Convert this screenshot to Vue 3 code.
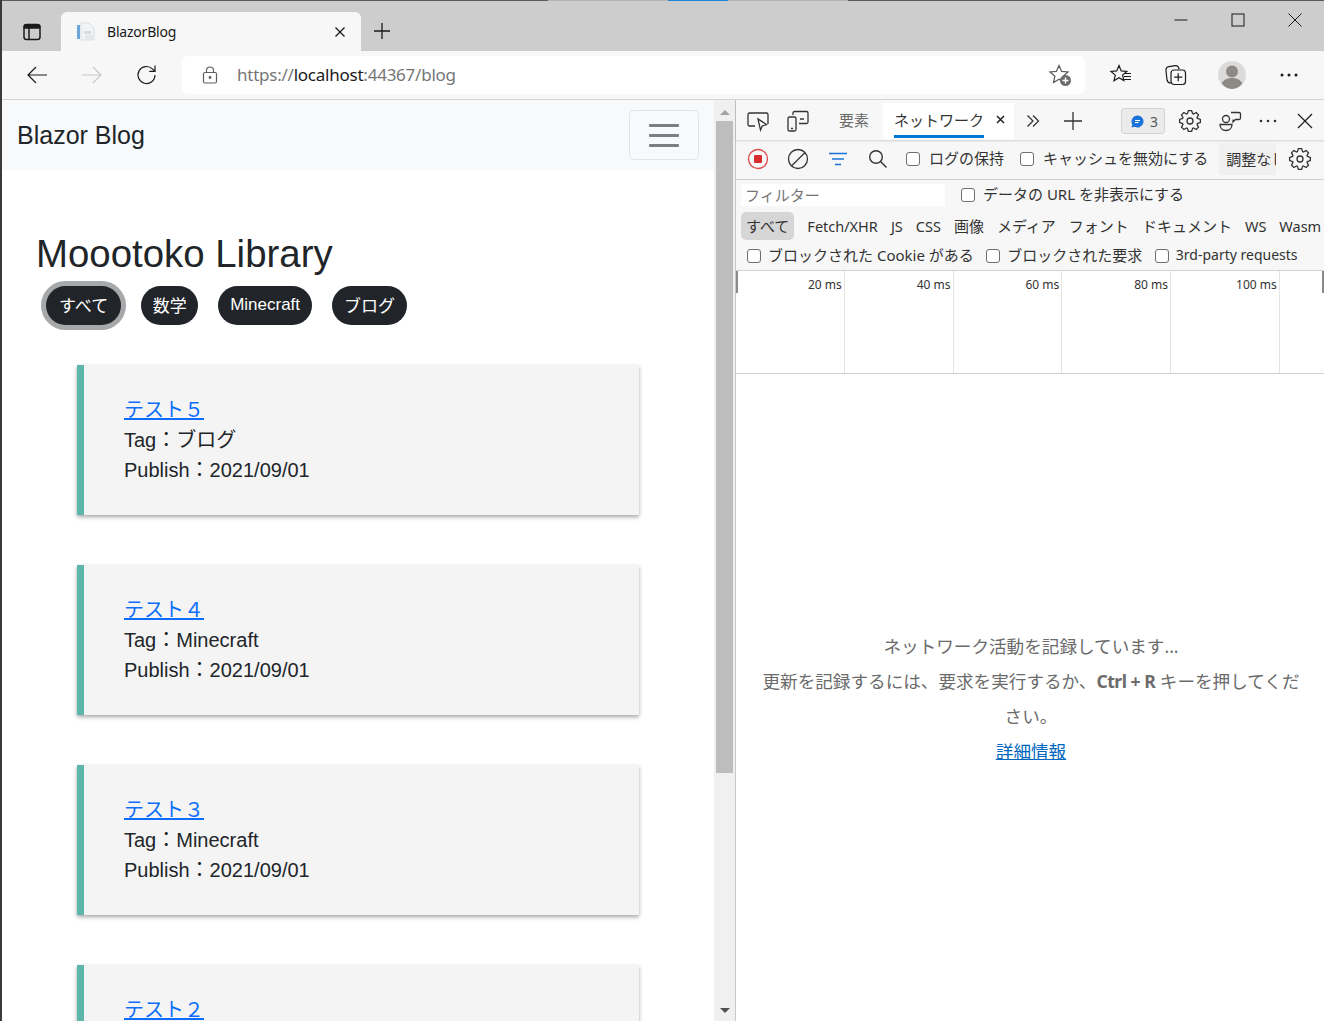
<template>
  <div class="window">
    <div class="top-strip">
      <span class="strip-a"></span>
      <span class="strip-b"></span>
      <span class="strip-c"></span>
    </div>

    <header class="titlebar">
      <button class="tab-panel-btn">
        <svg width="20" height="20" viewBox="0 0 20 20" fill="none" stroke="#1a1a1a" stroke-width="1.5">
          <rect x="2" y="2.5" width="16" height="15" rx="2.5" />
          <path d="M2.5 4.5 a2 2 0 0 1 2-1.6 h11 a2 2 0 0 1 2 1.6 v1.5 h-15z" fill="#1a1a1a" />
          <path d="M7 6v11" />
        </svg>
      </button>
      <div class="tab">
        <svg class="favicon" width="20" height="20" viewBox="0 0 20 20">
          <rect x="1" y="3" width="3" height="14" fill="#6aa8dc" />
          <path d="M5 1h8l5 5v12H5z" fill="#f1f3f5" stroke="#dbe0e4" />
          <rect x="8" y="9" width="7" height="3" fill="#d6dbe0" />
          <rect x="9" y="13" width="9" height="5" fill="#e3e7ea" />
        </svg>
        <span class="tab-title">BlazorBlog</span>
        <svg class="tab-close" width="12" height="12" viewBox="0 0 12 12" stroke="#1a1a1a" stroke-width="1.3">
          <path d="M1.5 1.5l9 9M10.5 1.5l-9 9" />
        </svg>
      </div>
      <svg class="new-tab" width="18" height="18" viewBox="0 0 18 18" stroke="#1a1a1a" stroke-width="1.3">
        <path d="M9 1v16M1 9h16" />
      </svg>
      <div class="window-controls">
        <span class="win-btn">
          <svg width="14" height="14" viewBox="0 0 14 14" stroke="#1a1a1a"><path d="M0.5 7h13" /></svg>
        </span>
        <span class="win-btn">
          <svg width="14" height="14" viewBox="0 0 14 14" fill="none" stroke="#1a1a1a"><rect x="1" y="1" width="12" height="12" /></svg>
        </span>
        <span class="win-btn">
          <svg width="14" height="14" viewBox="0 0 14 14" stroke="#1a1a1a"><path d="M0.5 0.5l13 13M13.5 0.5l-13 13" /></svg>
        </span>
      </div>
    </header>

    <nav class="toolbar">
      <span class="tool">
        <svg width="24" height="20" viewBox="0 0 24 20" fill="none" stroke="#1a1a1a" stroke-width="1.2">
          <path d="M22 10H3M11 2l-8 8 8 8" />
        </svg>
      </span>
      <span class="tool">
        <svg width="24" height="20" viewBox="0 0 24 20" fill="none" stroke="#c8c8c8" stroke-width="1.2">
          <path d="M2 10h19M13 2l8 8-8 8" />
        </svg>
      </span>
      <span class="tool">
        <svg width="22" height="22" viewBox="0 0 22 22" fill="none" stroke="#1a1a1a" stroke-width="1.2">
          <path d="M19 11a8.5 8.5 0 1 1-2.6-6.1L19 7.2" />
          <path d="M19 1.5v5.8h-5.8" />
        </svg>
      </span>
      <div class="address">
        <svg class="lock" width="16" height="18" viewBox="0 0 16 18" fill="none" stroke="#5f5f5f" stroke-width="1.2">
          <rect x="1.5" y="6.5" width="13" height="10.5" rx="1.5" />
          <path d="M4.5 6.5V4.5a3.5 3.5 0 0 1 7 0v2" />
          <circle cx="8" cy="11.5" r="0.8" fill="#5f5f5f" />
        </svg>
        <span class="url"><span class="url-dim">https://</span>localhost<span class="url-dim">:44367/blog</span></span>
        <svg class="add-fav" width="24" height="24" viewBox="0 0 24 24">
          <path d="M11 2.5l2.6 5.9 6.4.6-4.8 4.2 1.4 6.3-5.6-3.3-5.5 3.3 1.4-6.3L2 9l6.4-.6z" fill="none" stroke="#5a5a5a" stroke-width="1.2" />
          <circle cx="17.5" cy="17.5" r="5.5" fill="#6b6b6b" />
          <path d="M17.5 14.5v6M14.5 17.5h6" stroke="#fff" stroke-width="1.4" />
        </svg>
      </div>
      <span class="tool first-right">
        <svg width="24" height="24" viewBox="0 0 24 24" fill="none" stroke="#1a1a1a" stroke-width="1.2">
          <path d="M10 2.5l2.2 5.4 5.6.5-4.2 3.7 1.2 5.5-4.8-2.9-5 3 1.3-5.6L2 8.4l5.7-.5z" />
          <path d="M15 10.500h7M15 13.500h7M15 16.500h7" />
        </svg>
      </span>
      <span class="tool">
        <svg width="24" height="24" viewBox="0 0 24 24" fill="none" stroke="#1a1a1a" stroke-width="1.2">
          <path d="M7 20a4 4 0 0 1-4-3L2 7.5A3.5 3.5 0 0 1 5 3.6l6.4-1a3 3 0 0 1 3.4 2.6l.2 1.3" />
          <rect x="7" y="7" width="14.5" height="14.5" rx="3" fill="#f7f7f7" />
          <path d="M14.2 10.2v8M10.2 14.2h8" />
        </svg>
      </span>
      <span class="tool wide">
        <svg width="28" height="28" viewBox="0 0 28 28">
          <circle cx="14" cy="14" r="14" fill="#dcdbd9" />
          <circle cx="14" cy="10.5" r="6" fill="#8d8a86" />
          <path d="M3.8 22.5C5.5 18.5 9.5 17 14 17s8.500 1.500 10.200 5.500A14 14 0 0 1 14 28a14 14 0 0 1-10.200-5.500z" fill="#8d8a86" />
        </svg>
      </span>
      <span class="tool wide">
        <svg width="18" height="4" viewBox="0 0 18 4" fill="#1a1a1a">
          <circle cx="2" cy="2" r="1.500" /><circle cx="9" cy="2" r="1.500" /><circle cx="16" cy="2" r="1.500" />
        </svg>
      </span>
    </nav>

    <div class="content">
      <main class="page">
        <div class="navbar">
          <span class="brand">Blazor Blog</span>
          <span class="toggler">
            <i></i><i></i><i></i>
          </span>
        </div>
        <section class="library">
          <h1>Moootoko Library</h1>
          <div class="tags">
            <button v-for="(tag, i) in tags" :key="tag" class="tag" :class="{ focused: i === 0 }">{{ tag }}</button>
          </div>
          <article v-for="post in posts" :key="post.title" class="post">
            <a class="post-link" href="#">{{ post.title }}</a>
            <div>Tag：{{ post.tag }}</div>
            <div>Publish：{{ post.date }}</div>
          </article>
        </section>
      </main>

      <div class="scrollbar">
        <span class="arrow-up"></span>
        <span class="thumb"></span>
        <span class="arrow-down"></span>
      </div>

      <aside class="devtools">
        <div class="dt-tabs">
          <span class="dt-icon">
            <svg width="22" height="22" viewBox="0 0 22 22" fill="none" stroke="#333" stroke-width="1.300">
              <path d="M8 16H2.500a1.500 1.500 0 0 1-1.500-1.500v-10A1.500 1.500 0 0 1 2.500 3h17A1.500 1.500 0 0 1 21 4.500V14" />
              <path d="M11 9l2.500 11 1.800-4 4.200-1.500z" fill="#fff" />
            </svg>
          </span>
          <span class="dt-icon">
            <svg width="22" height="22" viewBox="0 0 22 22" fill="none" stroke="#333" stroke-width="1.300">
              <path d="M6 5V3a1.500 1.500 0 0 1 1.500-1.500h12A1.500 1.500 0 0 1 21 3v9a1.500 1.500 0 0 1-1.500 1.500H12" />
              <rect x="1" y="7" width="8" height="14" rx="1.500" />
              <path d="M4 18.500h2M13 9h4" />
            </svg>
          </span>
          <span class="dt-tab">要素</span>
          <span class="dt-tab active">
            <span class="dt-tab-label">ネットワーク</span>
            <svg width="9" height="9" viewBox="0 0 9 9" stroke="#222" stroke-width="1.500"><path d="M1 1l7 7M8 1L1 8" /></svg>
          </span>
          <svg class="more-tabs" width="14" height="14" viewBox="0 0 14 14" fill="none" stroke="#333" stroke-width="1.300">
            <path d="M1.500 1.500L7 7l-5.500 5.500M7 1.500L12.500 7 7 12.500" />
          </svg>
          <svg class="dt-plus" width="20" height="20" viewBox="0 0 20 20" stroke="#333" stroke-width="1.300">
            <path d="M10 1v18M1 10h18" />
          </svg>
          <span class="badge">
            <svg width="13" height="13" viewBox="0 0 13 13">
              <path d="M6.500 0.500a6 6 0 1 1-2.800 11.300L0.500 12.500l0.800-3A6 6 0 0 1 6.500 0.500z" fill="#1a73d9" />
              <path d="M4 5.500h5M4 7.500h3.500" stroke="#fff" />
            </svg>
            3
          </span>
          <span class="dt-icon gear-slot">
            <svg width="24" height="24" viewBox="0 0 24 24" fill="none" stroke="#333" stroke-width="1.300">
              <path :d="gearPath" />
              <circle cx="12" cy="12" r="3" />
            </svg>
          </span>
          <span class="dt-icon people">
            <svg width="24" height="24" viewBox="0 0 24 24" fill="none" stroke="#333" stroke-width="1.300">
              <circle cx="8" cy="10" r="3.500" />
              <path d="M2 15.500h12c0 3.500-2.500 6-6 6s-6-2.500-6-6z" />
              <path d="M13 3.500h8a1.500 1.500 0 0 1 1.500 1.500v4A1.500 1.500 0 0 1 21 10.500h-3.500L15 13v-2.500" />
            </svg>
          </span>
          <span class="dt-icon dots">
            <svg width="20" height="4" viewBox="0 0 20 4" fill="#333">
              <circle cx="3" cy="2" r="1.300" /><circle cx="10" cy="2" r="1.300" /><circle cx="17" cy="2" r="1.300" />
            </svg>
          </span>
          <span class="dt-icon close-slot">
            <svg width="16" height="16" viewBox="0 0 16 16" stroke="#222" stroke-width="1.300">
              <path d="M1 1l14 14M15 1L1 15" />
            </svg>
          </span>
        </div>

        <div class="dt-row record-row">
          <span class="dt-icon">
            <svg width="22" height="22" viewBox="0 0 22 22" fill="none">
              <circle cx="11" cy="11" r="9.500" stroke="#e0494a" stroke-width="1.300" />
              <rect x="7" y="7" width="8" height="8" rx="1" fill="#d92c2c" />
            </svg>
          </span>
          <span class="dt-icon">
            <svg width="22" height="22" viewBox="0 0 22 22" fill="none" stroke="#333" stroke-width="1.300">
              <circle cx="11" cy="11" r="9.500" />
              <path d="M4.500 18L18 4.500" />
            </svg>
          </span>
          <span class="dt-icon">
            <svg width="20" height="14" viewBox="0 0 20 14" stroke="#1a73d9" stroke-width="1.300">
              <path d="M1 1.500h18M4 7h12M7 12.500h6" />
            </svg>
          </span>
          <span class="dt-icon">
            <svg width="20" height="20" viewBox="0 0 20 20" fill="none" stroke="#333" stroke-width="1.400">
              <circle cx="8" cy="8" r="6.300" />
              <path d="M12.500 12.500l6 6" />
            </svg>
          </span>
          <label class="check preserve"><input type="checkbox" />ログの保持</label>
          <label class="check disable-cache"><input type="checkbox" />キャッシュを無効にする</label>
          <span class="throttle">調整なし</span>
          <span class="dt-icon throttle-gear">
            <svg width="24" height="24" viewBox="0 0 24 24" fill="none" stroke="#333" stroke-width="1.300">
              <path :d="gearPath" />
              <circle cx="12" cy="12" r="3" />
            </svg>
          </span>
        </div>

        <div class="filter-row">
          <span class="filter-input">フィルター</span>
          <label class="check"><input type="checkbox" />データの URL を非表示にする</label>
        </div>

        <div class="type-row">
          <span v-for="(type, i) in types" :key="type" class="type" :class="{ selected: i === 0, latin: isLatin(type) }">{{ type }}</span>
        </div>

        <div class="blocked-row">
          <label v-for="opt in blockedOptions" :key="opt" class="check" :class="{ latin: isLatin(opt) }"><input type="checkbox" />{{ opt }}</label>
        </div>

        <div class="timeline">
          <div v-for="t in ticks" :key="t" class="tick">{{ t }}</div>
          <div class="tick last"></div>
        </div>

        <div class="empty">
          <div class="message">
            <p>ネットワーク活動を記録しています...</p>
            <p>更新を記録するには、要求を実行するか、<b>Ctrl + R</b> キーを押してください。</p>
            <p><a href="#">詳細情報</a></p>
          </div>
        </div>
      </aside>
    </div>
  </div>
</template>

<script setup>
const tags = ['すべて', '数学', 'Minecraft', 'ブログ']

const posts = [
  { title: 'テスト５', tag: 'ブログ', date: '2021/09/01' },
  { title: 'テスト４', tag: 'Minecraft', date: '2021/09/01' },
  { title: 'テスト３', tag: 'Minecraft', date: '2021/09/01' },
  { title: 'テスト２', tag: '数学', date: '2021/09/01' }
]

const types = ['すべて', 'Fetch/XHR', 'JS', 'CSS', '画像', 'メディア', 'フォント', 'ドキュメント', 'WS', 'Wasm']

const blockedOptions = ['ブロックされた Cookie がある', 'ブロックされた要求', '3rd-party requests']

const ticks = ['20 ms', '40 ms', '60 ms', '80 ms', '100 ms']

const isLatin = (s) => /^[A-Za-z0-9]/.test(s)

// eight-toothed cog, built from data so both gears stay the same
const gearPath = (() => {
  const pts = []
  for (let i = 0; i < 8; i++) {
    const a = (i / 8) * Math.PI * 2
    const step = Math.PI / 8
    const at = (r, ang) => `${(12 + r * Math.cos(ang)).toFixed(2)} ${(12 + r * Math.sin(ang)).toFixed(2)}`
    pts.push(at(7.8, a - step * 0.85), at(10.5, a - step * 0.4), at(10.5, a + step * 0.4), at(7.8, a + step * 0.85))
  }
  return 'M' + pts.join('L') + 'Z'
})()
</script>

<style>
html,
body {
  margin: 0;
  overflow: hidden;
}
</style>

<style scoped>
.window {
  width: 1324px;
  height: 1021px;
  overflow: hidden;
  display: flex;
  flex-direction: column;
  box-sizing: border-box;
  border-left: 2px solid #3a3a3a;
  background: #fff;
  font-family: "Noto Sans", "Noto Sans CJK JP", sans-serif;
  color: #1a1a1a;
}

.top-strip {
  height: 1px;
  flex: none;
  display: flex;
  background: #5b5b5b;
  padding-left: 546px;
}
.strip-a,
.strip-c {
  width: 120px;
  background: #b5b5b5;
}
.strip-b {
  width: 60px;
  background: #1a86d8;
}

.titlebar {
  height: 50px;
  flex: none;
  display: flex;
  align-items: flex-end;
  background: #cdcdcd;
}
.tab-panel-btn {
  width: 59px;
  height: 39px;
  padding: 0;
  border: 0;
  background: none;
  display: flex;
  align-items: center;
  justify-content: center;
}
.tab {
  width: 300px;
  height: 39px;
  box-sizing: border-box;
  padding: 0 15px;
  display: flex;
  align-items: center;
  background: #f7f7f7;
  border-radius: 6px 6px 0 0;
}
.favicon {
  margin-right: 11px;
}
.tab-title {
  flex: 1;
  font-size: 14px;
  letter-spacing: -0.2px;
}
.new-tab {
  margin: 0 0 11px 12px;
}
.window-controls {
  margin-left: auto;
  align-self: stretch;
  display: flex;
  padding-right: 1px;
}
.win-btn {
  width: 57px;
  height: 37px;
  display: flex;
  align-items: center;
  justify-content: center;
}

.toolbar {
  height: 48px;
  flex: none;
  box-sizing: content-box;
  display: flex;
  align-items: center;
  padding-left: 7px;
  background: #f7f7f7;
  border-bottom: 1px solid #d4d4d4;
}
.tool {
  width: 55px;
  height: 38px;
  flex: none;
  display: flex;
  align-items: center;
  justify-content: center;
}
.tool.wide {
  width: 57px;
}
.first-right {
  margin-left: 8px;
}
.address {
  width: 903px;
  height: 38px;
  flex: none;
  margin-left: 8px;
  box-sizing: border-box;
  padding: 0 13px 0 20px;
  display: flex;
  align-items: center;
  background: #fff;
  border-radius: 6px;
}
.lock {
  margin-right: 19px;
}
.url {
  flex: 1;
  padding-bottom: 2px;
  font-size: 17px;
  letter-spacing: -0.24px;
}
.url-dim {
  color: #767676;
}

.content {
  flex: 1;
  min-height: 0;
  display: flex;
}
.page {
  width: 712px;
  flex: none;
  overflow: hidden;
  font-family: "Liberation Sans", "Noto Sans CJK JP", sans-serif;
  color: #212529;
}
.navbar {
  height: 70px;
  box-sizing: border-box;
  padding: 10px 15px;
  display: flex;
  align-items: center;
  justify-content: space-between;
  background: #f8f9fa;
}
.brand {
  font-size: 25px;
}
.toggler {
  width: 70px;
  height: 50px;
  box-sizing: border-box;
  border: 1px solid #e2e3e4;
  border-radius: 5px;
  display: flex;
  flex-direction: column;
  align-items: center;
  justify-content: center;
  gap: 7px;
}
.toggler i {
  width: 30px;
  height: 3px;
  border-radius: 1px;
  background: #7c7d7e;
}
.library {
  padding: 60px 0 0 34px;
}
h1 {
  margin: 0;
  font-size: 38.4px;
  font-weight: 400;
  line-height: 47px;
}
.tags {
  display: flex;
  gap: 20px;
  margin: 9px 0 40px 10px;
}
.tag {
  height: 39px;
  padding: 0 12px 2px;
  border: 0;
  border-radius: 20px;
  background: #212529;
  color: #fff;
  font-family: "Liberation Sans", "Noto Sans CJK JP", sans-serif;
  font-size: 17px;
}
.tag.focused {
  padding: 0 13px 2px;
  box-shadow: 0 0 0 5px #a7a8a9;
}
.tag:nth-child(2) {
  padding: 0 11.5px 2px;
}
.post {
  width: 562px;
  height: 150px;
  box-sizing: border-box;
  margin: 0 0 50px 41px;
  padding: 30px 0 0 40px;
  background: #f4f4f4;
  border-left: 7px solid #5cb6aa;
  box-shadow: 0 2px 4px rgba(0, 0, 0, 0.35);
  font-size: 20px;
  line-height: 30px;
}
.post-link {
  color: #0d6efd;
}

.scrollbar {
  width: 21px;
  flex: none;
  display: flex;
  flex-direction: column;
  align-items: center;
  background: #f0f0f0;
  border-right: 1px solid #c8c8c8;
  box-sizing: content-box;
}
.arrow-up {
  margin-top: 10px;
  border: 5px solid transparent;
  border-top: 0;
  border-bottom-color: #a3a3a3;
}
.thumb {
  width: 17px;
  height: 652px;
  margin-top: 6px;
  background: #bdbdbd;
}
.arrow-down {
  margin-top: auto;
  margin-bottom: 8px;
  border: 5px solid transparent;
  border-bottom: 0;
  border-top-color: #505050;
}

.devtools {
  flex: 1;
  min-width: 0;
  display: flex;
  flex-direction: column;
  background: #f7f7f7;
  font-size: 15px;
  color: #333;
}
.dt-tabs {
  height: 40px;
  flex: none;
  box-sizing: border-box;
  padding: 3px 0 1px 2px;
  display: flex;
  align-items: center;
  box-shadow: 0 1px 2px rgba(0, 0, 0, 0.15);
}
.dt-icon {
  width: 40px;
  height: 36px;
  flex: none;
  display: flex;
  align-items: center;
  justify-content: center;
}
.dt-tab {
  height: 36px;
  box-sizing: border-box;
  padding-bottom: 4px;
  display: flex;
  align-items: center;
  color: #6a6a6a;
  margin-left: 21px;
}
.dt-tab.active {
  position: relative;
  width: 131px;
  margin-left: 14px;
  padding: 0 9px 4px 11px;
  justify-content: space-between;
  background: #fff;
  color: #333;
}
.dt-tab.active::after {
  content: "";
  position: absolute;
  left: 11px;
  width: 90px;
  bottom: 1px;
  height: 3px;
  background: #0078d4;
}
.more-tabs {
  margin-left: 12px;
}
.dt-plus {
  margin-left: 23px;
}
.badge {
  width: 44px;
  height: 26px;
  box-sizing: border-box;
  margin-left: 38px;
  padding-left: 9px;
  display: flex;
  align-items: center;
  gap: 6px;
  background: #ebebeb;
  border: 1px solid #d4d4d4;
  border-radius: 3px;
  font-size: 14px;
  color: #555;
}
.gear-slot {
  margin-left: 5px;
}
.dots {
  width: 36px;
}
.close-slot {
  width: 37px;
}
.dt-row {
  height: 36px;
  flex: none;
  margin-top: 1px;
  padding: 0 0 2px 2px;
  box-sizing: content-box;
  display: flex;
  align-items: center;
  border-bottom: 1px solid #d0d0d0;
}
.check {
  display: flex;
  align-items: center;
  gap: 9px;
  padding-bottom: 3px;
  white-space: nowrap;
  font-size: 15px;
  color: #333;
}
.check input {
  appearance: none;
  width: 14px;
  height: 14px;
  margin: 2px 0 0;
  flex: none;
  box-sizing: border-box;
  background: #fff;
  border: 1px solid #6e6e6e;
  border-radius: 3px;
}
.preserve {
  margin-left: 8px;
}
.disable-cache {
  margin-left: 16px;
}
.throttle {
  width: 50px;
  height: 30px;
  flex: none;
  margin-left: 11px;
  padding: 0 0 2px 7px;
  box-sizing: content-box;
  overflow: hidden;
  white-space: nowrap;
  display: flex;
  align-items: center;
  background: #f0f0f0;
}
.throttle-gear {
  margin-left: 4px;
}
.filter-row {
  height: 30px;
  flex: none;
  padding: 1px 0 1px 5px;
  box-sizing: border-box;
  display: flex;
  align-items: center;
  gap: 16px;
}
.filter-row .check {
  gap: 8px;
}
.filter-input {
  width: 204px;
  height: 22px;
  box-sizing: border-box;
  padding: 0 0 2px 4px;
  display: flex;
  align-items: center;
  background: #fff;
  color: #757575;
}
.type-row {
  height: 32px;
  flex: none;
  padding: 0 0 1px 5px;
  box-sizing: border-box;
  display: flex;
  align-items: center;
  gap: 13px;
}
.type {
  white-space: nowrap;
}
.type.latin {
  font-size: 14.5px;
}
.type.selected {
  height: 28px;
  padding: 0 5px 1px;
  box-sizing: border-box;
  display: flex;
  align-items: center;
  background: #d6d6d6;
  border-radius: 5px;
}
.blocked-row {
  height: 28px;
  flex: none;
  padding-left: 11px;
  display: flex;
  align-items: center;
  gap: 12.5px;
  border-bottom: 1px solid #d0d0d0;
}
.blocked-row .check {
  gap: 7px;
}
.blocked-row .check.latin {
  font-size: 14px;
}
.timeline {
  height: 102px;
  flex: none;
  display: flex;
  background: #fff;
  border-bottom: 1px solid #d0d0d0;
  box-sizing: content-box;
}
.tick {
  width: 108.75px;
  flex: none;
  box-sizing: border-box;
  padding: 5px 2px 0 0;
  border-right: 1px solid #e4e4e4;
  text-align: right;
  font-size: 12px;
  color: #333;
}
.tick:first-child {
  background: linear-gradient(#8a8a8a, #8a8a8a) left top / 2px 22px no-repeat;
}
.tick.last {
  flex: 1;
  border-right: 0;
  background: linear-gradient(#8a8a8a, #8a8a8a) right top / 2px 22px no-repeat;
}
.empty {
  flex: 1;
  display: flex;
  align-items: center;
  justify-content: center;
  padding: 2px 0 0 2px;
  background: #fff;
}
.message {
  width: 552px;
  text-align: center;
  font-size: 17.6px;
  line-height: 35px;
  color: #6b6b6b;
}
.message p {
  margin: 0;
}
.message b {
  letter-spacing: -0.5px;
}
.message a {
  color: #0067c0;
}
</style>
